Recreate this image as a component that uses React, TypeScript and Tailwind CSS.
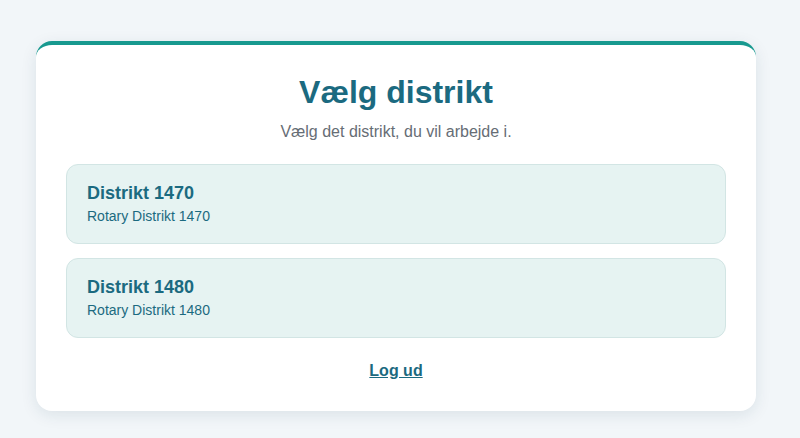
export default function App() {
  const districts = [
    { id: "1470", name: "Distrikt 1470", desc: "Rotary Distrikt 1470" },
    { id: "1480", name: "Distrikt 1480", desc: "Rotary Distrikt 1480" },
  ];

  return (
    <div className="min-h-screen bg-[#f2f6f9] pl-9 pt-[41px] pb-7 font-['Liberation_Sans',Arial,sans-serif]">
      <div className="w-[720px] bg-white rounded-2xl border-t-4 border-[#17998f] shadow-[0_4px_16px_rgba(20,60,80,0.10)] px-[30px] pt-[28px] pb-[28px]">
        <h1 className="text-[32px] leading-[38px] font-bold text-[#1b6a80] text-center">Vælg distrikt</h1>
        <p className="text-base text-[#666d75] text-center mt-[9px]">Vælg det distrikt, du vil arbejde i.</p>

        <div className="mt-[20px] flex flex-col gap-[14px]">
          {districts.map((d) => (
            <button
              key={d.id}
              className="flex flex-col items-start justify-start text-left h-[80px] rounded-xl bg-[#e6f3f2] border border-[#d2e5e4] px-[20px] pt-[17px]"
            >
              <div className="text-lg leading-[22px] font-bold text-[#1b6a80]">{d.name}</div>
              <div className="text-sm leading-[18px] text-[#1b6a80] mt-[3px]">{d.desc}</div>
            </button>
          ))}
        </div>

        <div className="text-center mt-[21px]">
          <a href="#" className="text-base font-bold text-[#1b6a80] underline">Log ud</a>
        </div>
      </div>
    </div>
  );
}
